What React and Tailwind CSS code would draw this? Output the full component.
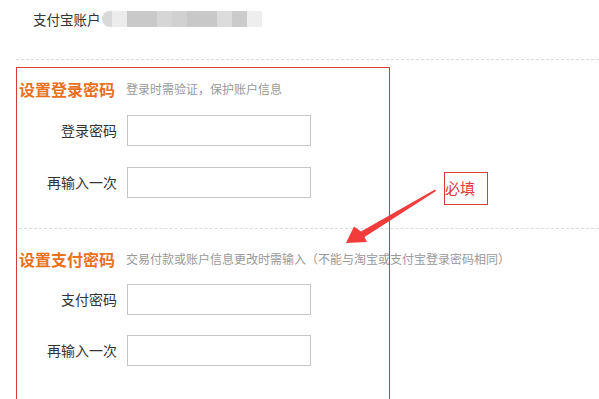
import React from "react";

const blurBlocks = [
  "w-[10px] bg-[#d9d9d9] rounded-l-full",
  "w-[15px] bg-[#ececec]",
  "w-[30px] bg-[#c9c9c9]",
  "w-[15px] bg-[#d6d6d6]",
  "w-[15px] bg-[#d1d1d1]",
  "w-[30px] bg-[#c8c8c8]",
  "w-[15px] bg-[#dcdcdc]",
  "w-[15px] bg-[#cbcbcb]",
  "w-[15px] bg-[#eeeeee]",
];

const Field = ({ label, className = "" }) => (
  <div className={"flex items-center " + className}>
    <div className="w-[98px] text-right text-[14px] text-[#333]">{label}</div>
    <div className="ml-[10px] w-[184px] h-[31px] border border-[#c6c6c6] bg-white" />
  </div>
);

const SectionTitle = ({ title, hint, className = "" }) => (
  <div className={"flex items-center h-[20px] " + className}>
    <span className="text-[16px] font-bold text-[#e8711e] leading-[20px]">{title}</span>
    <span className="ml-[11px] text-[12px] text-[#999] leading-[20px]">{hint}</span>
  </div>
);

export default function App() {
  return (
    <div
      className="relative w-[599px] h-[399px] overflow-hidden bg-white"
      style={{ fontFamily: '"Noto Sans CJK SC", "Microsoft YaHei", sans-serif' }}
    >
      <div className="flex items-center h-[38px] pl-[33px]">
        <span className="text-[13.5px] text-[#333]">支付宝账户</span>
        <div className="flex h-[16px] ml-[1px]">
          {blurBlocks.map((c, i) => (
            <div key={i} className={"h-full " + c} />
          ))}
        </div>
      </div>

      <div className="mt-[21px] ml-[16px] border-t border-dashed border-[#dcdcdc]" />

      <div className="pl-[19px]">
        <SectionTitle title="设置登录密码" hint="登录时需验证，保护账户信息" className="mt-[19px]" />
        <Field label="登录密码" className="mt-[16px]" />
        <Field label="再输入一次" className="mt-[21px]" />
      </div>

      <div className="mt-[30px] ml-[19px] border-t border-dashed border-[#dcdcdc]" />

      <div className="pl-[19px]">
        <SectionTitle
          title="设置支付密码"
          hint="交易付款或账户信息更改时需输入（不能与淘宝或支付宝登录密码相同）"
          className="mt-[20px]"
        />
        <Field label="支付密码" className="mt-[15px]" />
        <Field label="再输入一次" className="mt-[20px]" />
      </div>

      {/* annotation overlay */}
      <div className="absolute left-[16px] top-[67px] w-[374px] h-[400px] border border-[#d63c3c]" />
      <div className="absolute left-[444px] top-[172px] w-[44px] h-[33px] border border-[#d63c3c]" />
      <span className="absolute left-[445px] top-[177px] text-[15px] leading-[22px] text-[#e0393e]">必填</span>
      <svg className="absolute left-0 top-0" width="599" height="399">
        <polygon
          points="435,189.5 361,231.5 354,226.5 346,243 367,242 364.5,237 436,191"
          fill="#f23b3b"
        />
      </svg>
    </div>
  );
}
